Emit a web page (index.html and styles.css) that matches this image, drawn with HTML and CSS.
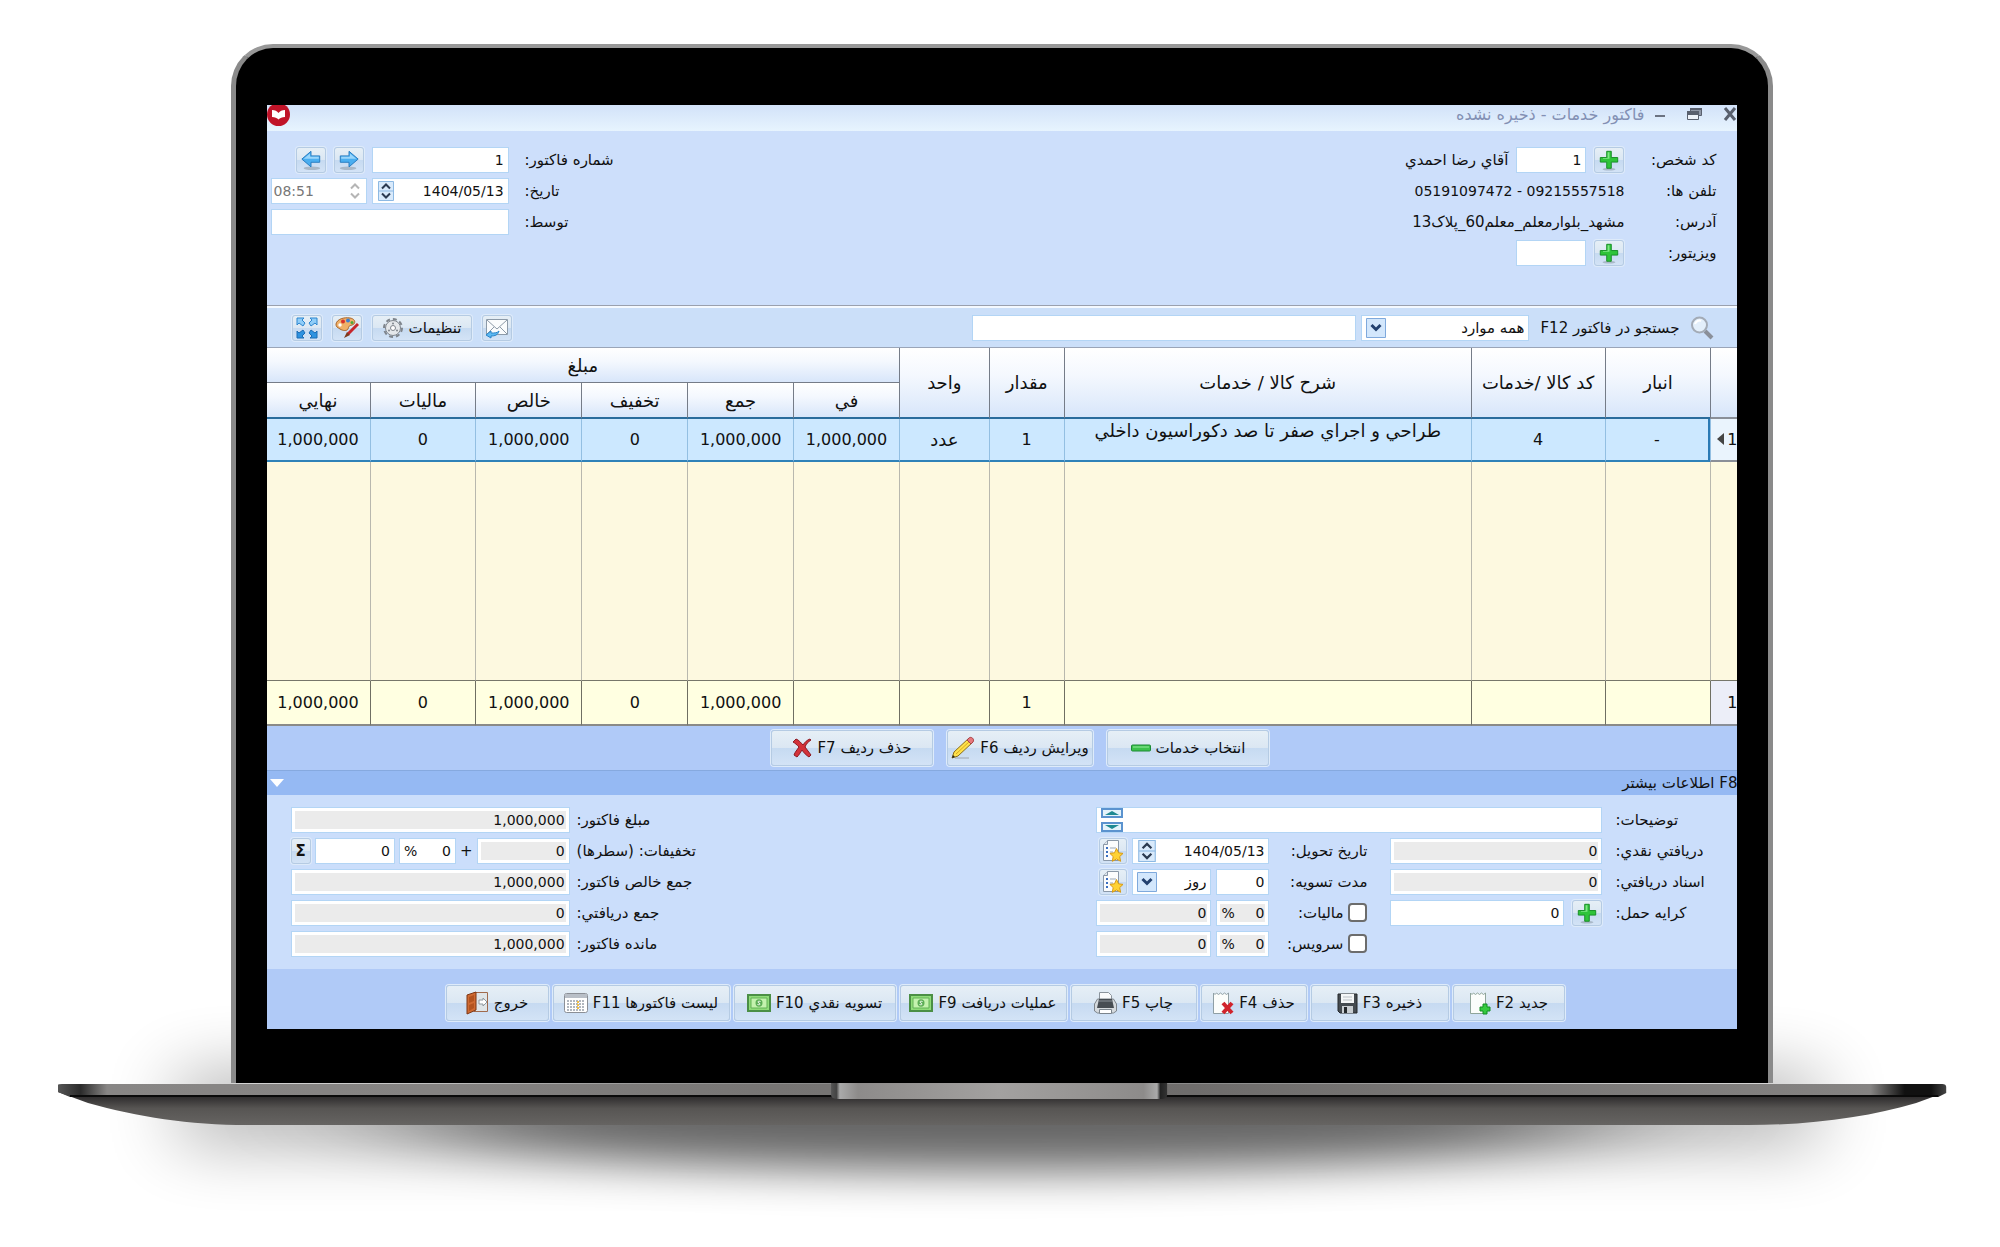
FILE: index.html
```
<!DOCTYPE html>
<html lang="fa">
<head>
<meta charset="UTF-8">
<meta name="viewport" content="width=device-width, initial-scale=1.0">
<title>فاکتور خدمات</title>
<link rel="stylesheet" href="styles.css">
</head>
<body>
  <!-- Shared icons -->
  <svg class="sprite" aria-hidden="true">
    <symbol id="i-plus" viewBox="0 0 24 24">
      <ellipse cx="12" cy="22" rx="7" ry="1.5" fill="#a9b8c8"/>
      <path d="M9.500 2.500h5v6.800h7v5h-7v6.700h-5v-6.700h-7v-5h7z" fill="#2fc43a" stroke="#138a22"/>
      <path d="M10.500 3.500h2v7h-7v-.8h5z" fill="#7fe886"/>
    </symbol>
    <symbol id="i-arrow" viewBox="0 0 24 24">
      <ellipse cx="13" cy="21" rx="9" ry="2" fill="#a9b8c8"/>
      <path d="M2 11L12 2.500v5h9.500v7H12v5z" fill="#4aaef0" stroke="#2277bd" stroke-linejoin="round"/>
      <path d="M4 10.700L11 5v3.500h9.500v2z" fill="#9ad6fb"/>
    </symbol>
    <symbol id="i-spin" viewBox="0 0 18 20">
      <path d="M1.500.5h15v19h-15z" fill="#d9eafb" stroke="#8db9e3"/>
      <path d="M1.500 10h15" stroke="#8db9e3"/>
      <path d="M5 7.500l4-4 4 4M5 12.500l4 4 4-4" fill="none" stroke="#2b3a50" stroke-width="2"/>
    </symbol>
    <symbol id="i-drop" viewBox="0 0 20 20">
      <path d="M.5.5h19v19H.5z" fill="#d3e7fc" stroke="#7fa9dc"/>
      <path d="M5.500 7l4.500 4.500L14.500 7" fill="none" stroke="#23416f" stroke-width="3"/>
    </symbol>
    <symbol id="i-list" viewBox="0 0 24 24">
      <path d="M6.500 1.500h11v20h-15v-16z" fill="#fbfcfd" stroke="#8a98a8"/>
      <path d="M6.500 1.500v4h-4" fill="#dde5ec" stroke="#8a98a8"/>
      <path d="M5 9h2M5 13h2M5 17h2" stroke="#3a6ec0" stroke-width="2"/>
      <path d="M9 9h6M9 13h3" stroke="#9aa7b5"/>
      <path d="M15.500 9.500l2 4.300 4.500.6-3.300 3.200.9 4.700-4.100-2.300-4.200 2.300.9-4.700-3.300-3.200 4.600-.6z" fill="#ffd233" stroke="#d99a12"/>
    </symbol>
    <symbol id="i-money" viewBox="0 0 24 18">
      <path d="M1 1h22v16H1z" fill="#8fdc79" stroke="#4b8f45" stroke-width="2"/>
      <path d="M4 4h16v10H4z" fill="#c4f2ae" stroke="#62b257"/>
      <ellipse cx="12" cy="9" rx="3.500" ry="3.700" fill="#5cae55"/>
      <path d="M13.500 7.500c-3-1-3 1-1.500 1.500s1.500 2.500-1.500 1.500" fill="none" stroke="#fff"/>
    </symbol>
  </svg>

  <main class="laptop">
    <div class="lid">
      <div class="screen" dir="rtl">

        <header class="titlebar">
          <button class="win-btn close" aria-label="بستن"><svg width="14" height="14" viewBox="0 0 14 14"><path d="M2 1l10 12M12 1L2 13" stroke="#59606e" stroke-width="3"/></svg></button>
          <button class="win-btn" aria-label="بازیابی"><svg width="17" height="14" viewBox="0 0 17 14"><path d="M4.500 1.500h11v7h-3v-3h-8z" fill="#8f97a6" stroke="#59606e"/><path d="M1.500 4.500h11v8h-11z" fill="#eef3fa" stroke="#59606e"/><path d="M1 4h12v4H1zM4 1h12v2H4z" fill="#59606e"/></svg></button>
          <button class="win-btn" aria-label="کوچک کردن"><svg width="12" height="14" viewBox="0 0 12 14"><path d="M1 9h10" stroke="#6b7281" stroke-width="2"/></svg></button>
          <h1>فاکتور خدمات - ذخیره نشده</h1>
          <svg class="brand" width="23" height="23" viewBox="0 0 23 23"><circle cx="11.500" cy="11.500" r="11.500" fill="#c01328"/><path d="M5 7c3 0 5 1 6.500 3C13 8 15 7 18 7v7c-3 0-5 1-6.500 2.500C10 15 8 14 5 14z" fill="#fff"/></svg>
        </header>

        <section class="head">
          <div class="customer">
            <label for="personCode">کد شخص:</label>
            <div class="line">
              <button class="icon-btn" aria-label="افزودن شخص"><svg width="22" height="22"><use href="#i-plus"/></svg></button>
              <input class="box code" type="text" id="personCode" value="1">
              <span>آقاي رضا احمدي</span>
            </div>
            <span>تلفن ها:</span>
            <div class="line phone">09215557518 - 05191097472</div>
            <span>آدرس:</span>
            <div class="line">مشهد_بلوارمعلم_معلم60_پلاک13</div>
            <label for="visitor">ویزیتور:</label>
            <div class="line">
              <button class="icon-btn" aria-label="افزودن ویزیتور"><svg width="22" height="22"><use href="#i-plus"/></svg></button>
              <input class="box code" type="text" id="visitor">
            </div>
          </div>

          <div class="invoice">
            <label for="invoiceNo">شماره فاکتور:</label>
            <div class="line">
              <input class="box date" type="text" id="invoiceNo" value="1">
              <button class="icon-btn" aria-label="بعدی"><svg class="flip" width="22" height="22"><use href="#i-arrow"/></svg></button>
              <button class="icon-btn" aria-label="قبلی"><svg width="22" height="22"><use href="#i-arrow"/></svg></button>
            </div>
            <label for="invoiceDate">تاریخ:</label>
            <div class="line tight">
              <div class="box date">
                <input type="text" id="invoiceDate" value="1404/05/13">
                <svg class="spin" width="18" height="20"><use href="#i-spin"/></svg>
              </div>
              <div class="box time">
                <svg width="18" height="20" viewBox="0 0 18 20"><path d="M5 7.500l4-4 4 4M5 12.500l4 4 4-4" fill="none" stroke="#b5b5b5" stroke-width="2"/></svg>
                <input type="text" aria-label="ساعت" value="08:51" disabled>
              </div>
            </div>
            <label for="by">توسط:</label>
            <div class="line"><input class="box full" type="text" id="by"></div>
          </div>
        </section>

        <section class="toolbar">
          <svg width="24" height="24" viewBox="0 0 24 24"><path d="M15 15l7 7" stroke="#8a8f99" stroke-width="4"/><circle cx="9.500" cy="9" r="7.500" fill="#e3effb" stroke="#a3abb6" stroke-width="2"/><path d="M5 8c1-3 4-4 6-3" fill="none" stroke="#fff" stroke-width="2"/></svg>
          <label for="search">جستجو در فاکتور F12</label>
          <div class="box filter">
            <select aria-label="محدوده جستجو"><option>همه موارد</option></select>
            <svg width="20" height="20"><use href="#i-drop"/></svg>
          </div>
          <input class="box search" type="text" id="search">
          <div class="tools">
            <button class="icon-btn" aria-label="ارسال پیام"><svg width="24" height="22" viewBox="0 0 24 22"><path d="M1.500 2.500h21v15h-21z" fill="#fafcfd" stroke="#8c9aa8"/><path d="M2 3l10 9L22 3M2 17l7-7M22 17l-7-7" fill="none" stroke="#8c9aa8"/><path d="M1 18l5-4v2c4 0 6 0 8-2-1 4-4 5-8 5v2z" fill="#5cb9f2" stroke="#2a84c8"/></svg></button>
            <button class="btn settings">تنظیمات <svg width="22" height="22" viewBox="0 0 22 22"><circle cx="11" cy="11" r="9" fill="none" stroke="#7f858c" stroke-width="2" stroke-dasharray="4 3"/><circle cx="11" cy="11" r="7.500" fill="#e4e7ea" stroke="#7f858c"/><circle cx="11" cy="11" r="2.500" fill="#fff" stroke="#7f858c"/><circle cx="11" cy="6.500" r="1" fill="#7f858c"/><circle cx="7" cy="13.500" r="1" fill="#7f858c"/><circle cx="15" cy="13.500" r="1" fill="#7f858c"/></svg></button>
            <button class="icon-btn" aria-label="رنگ‌ها"><svg width="24" height="22" viewBox="0 0 24 22"><path d="M1 7c1-5 8-7 14-6s6 6 2 7-3 2-4 4-5 2-8 0-4-2-4-5z" fill="#efb068" stroke="#a8642a"/><circle cx="5" cy="8" r="1.700" fill="#fff"/><circle cx="8" cy="4.500" r="2" fill="#d8332c"/><circle cx="13" cy="3.500" r="2" fill="#3c7fd0"/><circle cx="17" cy="5.500" r="1.500" fill="#4ca93e"/><path d="M23 7L13 17" stroke="#c6262c" stroke-width="3"/><path d="M12 15l3 3-6 3z" fill="#7d3a1c"/></svg></button>
            <button class="icon-btn" aria-label="تمام صفحه"><svg width="24" height="22" viewBox="0 0 24 22"><path d="M2 1h7L7 3l3 3-2 3-4-3-2 2zM22 1h-7l2 2-3 3 2 3 4-3 2 2z" fill="#8fcdf8" stroke="#2d86cf"/><path d="M2 21h7l-2-2 3-3-2-3-4 3-2-2zM22 21h-7l2-2-3-3 2-3 4 3 2-2z" fill="#2f93e0" stroke="#1c6cb4"/></svg></button>
          </div>
        </section>

        <table class="items">
          <colgroup>
            <col class="c-mark"><col class="c-store"><col class="c-code"><col class="c-desc"><col class="c-qty"><col class="c-unit">
            <col class="c-sum"><col class="c-sum"><col class="c-sum"><col class="c-sum"><col class="c-sum"><col class="c-final">
          </colgroup>
          <thead>
            <tr>
              <th rowspan="2"></th>
              <th rowspan="2">انبار</th>
              <th rowspan="2">کد کالا /خدمات</th>
              <th rowspan="2">شرح کالا / خدمات</th>
              <th rowspan="2">مقدار</th>
              <th rowspan="2">واحد</th>
              <th colspan="6" class="group">مبلغ</th>
            </tr>
            <tr class="sub">
              <th>في</th>
              <th>جمع</th>
              <th>تخفیف</th>
              <th>خالص</th>
              <th>مالیات</th>
              <th>نهایي</th>
            </tr>
          </thead>
          <tbody>
            <tr class="selected">
              <td class="mark"><span>1</span><svg width="7" height="12" viewBox="0 0 7 12"><path d="M7 0v12L0 6z" fill="#444"/></svg></td>
              <td>-</td>
              <td>4</td>
              <td class="desc">طراحي و اجراي صفر تا صد دکوراسیون داخلي</td>
              <td>1</td>
              <td class="unit">عدد</td>
              <td>1,000,000</td>
              <td>1,000,000</td>
              <td>0</td>
              <td>1,000,000</td>
              <td>0</td>
              <td>1,000,000</td>
            </tr>
            <tr class="blank">
              <td></td><td></td><td></td><td></td><td></td><td></td><td></td><td></td><td></td><td></td><td></td><td></td>
            </tr>
          </tbody>
          <tfoot>
            <tr>
              <td class="mark"><span>1</span></td>
              <td></td>
              <td></td>
              <td></td>
              <td>1</td>
              <td></td>
              <td></td>
              <td>1,000,000</td>
              <td>0</td>
              <td>1,000,000</td>
              <td>0</td>
              <td>1,000,000</td>
            </tr>
          </tfoot>
        </table>

        <nav class="row-actions">
          <button class="btn w-l">انتخاب خدمات <svg width="20" height="8" viewBox="0 0 20 8"><rect x=".5" y="1" width="19" height="6" rx="1" fill="#3cc24c" stroke="#1d8a35"/><path d="M2 3h16" stroke="#93eb9b"/></svg></button>
          <button class="btn w-m">ویرایش ردیف F6 <svg width="24" height="24" viewBox="0 0 24 24"><path d="M4 22h14" stroke="#b5c2d2" stroke-width="2"/><path d="M1 22l2-6L18 2l4 4L7 20z" fill="#ffe14a" stroke="#8a6d1c"/><path d="M5 18L20 4" stroke="#d9a91f"/><path d="M18 2c2-2 6 1 4 4l-2 2-4-4z" fill="#e6787c" stroke="#a84448"/><path d="M1 22l1-3 2 2z" fill="#222"/></svg></button>
          <button class="btn w-l">حذف ردیف F7 <svg width="20" height="20" viewBox="0 0 20 20"><path d="M1 4l3-3c3 1 5 4 7 6 2-3 4-5 7-6l1 1c-3 2-5 4-6 7 2 3 4 5 6 8l-2 2c-3-2-5-4-7-7-2 3-3 5-5 7l-3-2c1-3 3-5 5-8C5 7 3 5 1 4z" fill="#d3323a" stroke="#8e1a22"/></svg></button>
        </nav>

        <div class="band">
          <h2>F8 اطلاعات بیشتر</h2>
          <svg width="14" height="8" viewBox="0 0 14 8"><path d="M0 0h14L7 8z" fill="#fff"/></svg>
        </div>

        <section class="details">
          <div class="extra">
            <label class="end" for="notes">توضیحات:</label>
            <div class="box notes">
              <input type="text" id="notes">
              <svg width="22" height="24" viewBox="0 0 22 24"><path d="M1 1h20v8H1zM1 15h20v8H1z" fill="#e4f3fb" stroke="#5b93cf" stroke-width="2"/><path d="M4 7l7-4 7 4zM4 17l7 4 7-4z" fill="#1f8a93"/></svg>
            </div>

            <label class="end" for="cash">دریافتي نقدي:</label>
            <input class="box gray" type="text" id="cash" value="0" readonly>
            <label for="delivery">تاریخ تحویل:</label>
            <div class="line tight">
              <div class="box grow">
                <input type="text" id="delivery" value="1404/05/13">
                <svg class="spin" width="20" height="22"><use href="#i-spin"/></svg>
              </div>
              <button class="icon-btn pick" aria-label="انتخاب تاریخ"><svg width="24" height="24"><use href="#i-list"/></svg></button>
            </div>

            <label class="end" for="docs">اسناد دریافتي:</label>
            <input class="box gray" type="text" id="docs" value="0" readonly>
            <label for="term">مدت تسویه:</label>
            <div class="line tight">
              <input class="box small" type="text" id="term" value="0">
              <div class="box grow">
                <select aria-label="واحد مدت"><option>روز</option></select>
                <svg width="20" height="20"><use href="#i-drop"/></svg>
              </div>
              <button class="icon-btn pick" aria-label="انتخاب مدت"><svg width="24" height="24"><use href="#i-list"/></svg></button>
            </div>

            <label class="end" for="freight">کرایه حمل:</label>
            <div class="line">
              <button class="icon-btn" aria-label="افزودن کرایه"><svg width="22" height="22"><use href="#i-plus"/></svg></button>
              <input class="box grow" type="text" id="freight" value="0">
            </div>
            <label class="check"><input type="checkbox"> مالیات:</label>
            <div class="line tight">
              <div class="box small gray"><input type="text" aria-label="درصد مالیات" value="0" readonly><span>%</span></div>
              <input class="box gray grow" type="text" aria-label="مبلغ مالیات" value="0" readonly>
            </div>

            <label class="check last"><input type="checkbox"> سرویس:</label>
            <div class="line tight">
              <div class="box small gray"><input type="text" aria-label="درصد سرویس" value="0" readonly><span>%</span></div>
              <input class="box gray grow" type="text" aria-label="مبلغ سرویس" value="0" readonly>
            </div>
          </div>

          <div class="totals">
            <label class="end" for="total">مبلغ فاکتور:</label>
            <input class="box gray" type="text" id="total" value="1,000,000" readonly>
            <label class="end" for="discount">تخفیفات: (سطرها)</label>
            <div class="line tight">
              <input class="box gray row-disc" type="text" id="discount" value="0" readonly>
              <span>+</span>
              <div class="box percent"><input type="text" aria-label="درصد تخفیف" value="0"><span>%</span></div>
              <input class="box grow" type="text" aria-label="مبلغ تخفیف" value="0">
              <button class="icon-btn sigma" aria-label="جمع">Σ</button>
            </div>
            <label class="end" for="net">جمع خالص فاکتور:</label>
            <input class="box gray" type="text" id="net" value="1,000,000" readonly>
            <label class="end" for="received">جمع دریافتي:</label>
            <input class="box gray" type="text" id="received" value="0" readonly>
            <label class="end" for="remain">مانده فاکتور:</label>
            <input class="box gray" type="text" id="remain" value="1,000,000" readonly>
          </div>
        </section>

        <footer class="actions">
          <button class="btn w-new">جدید F2 <svg width="22" height="24" viewBox="0 0 22 24"><path d="M1.500 2v20.500h15V2l-2 1.500L12.500 2l-2 1.500L8.500 2l-2 1.500L4.500 2 3 3.500z" fill="#fbfdfb" stroke="#8fa59b"/><path d="M14 13h4v3h3v4h-3v3h-4v-3h-3v-4h3z" fill="#35ca3f" stroke="#128d22"/></svg></button>
          <button class="btn w-save">ذخیره F3 <svg width="21" height="21" viewBox="0 0 21 21"><path d="M1 1h19v19H3l-2-2z" fill="#454b50" stroke="#24282b"/><path d="M4 1h13v9H4z" fill="#f4f6f7"/><path d="M6 4h9M6 7h9" stroke="#b9bfc4"/><path d="M5 13h11v7H5z" fill="#c9ced2"/><path d="M7 14h3v6H7z" fill="#24282b"/></svg></button>
          <button class="btn w-del">حذف F4 <svg width="22" height="24" viewBox="0 0 22 24"><path d="M1.500 2v20.500h15V2l-2 1.500L12.500 2l-2 1.500L8.500 2l-2 1.500L4.500 2 3 3.500z" fill="#fbfdfb" stroke="#8f9fa5"/><path d="M11 12l9 10M20 12l-9 10" stroke="#d0242c" stroke-width="4"/></svg></button>
          <button class="btn w-print">چاپ F5 <svg width="23" height="24" viewBox="0 0 23 24"><path d="M5.500 10V1.500h9l3 3V10" fill="#fafbfc" stroke="#8b949c"/><path d="M3.500 8h16l3 5v7l-3 2h-16l-3-2v-7z" fill="#d5dade" stroke="#7d848a"/><path d="M5 8h13l2 9H3z" fill="#474d53"/><path d="M5 10h13" stroke="#8a9198"/><path d="M5.500 18.500h12v4h-12z" fill="#fff" stroke="#7b848c"/></svg></button>
          <button class="btn w-f9">عملیات دریافت F9 <svg width="24" height="18"><use href="#i-money"/></svg></button>
          <button class="btn w-f10">تسویه نقدي F10 <svg width="24" height="18"><use href="#i-money"/></svg></button>
          <button class="btn w-f11">لیست فاکتورها F11 <svg width="24" height="20" viewBox="0 0 24 20"><rect x=".5" y=".5" width="23" height="19" rx="2" fill="#fff" stroke="#8b8f96"/><path d="M1 1h22v4H1z" fill="#b9bfc7"/><path d="M3 8h18M3 11h18M3 14h18M3 17h18" stroke="#b1b7bf" stroke-width="2" stroke-dasharray="2 1"/><path d="M14 8v9" stroke="#f0bf4a" stroke-width="2" stroke-dasharray="2 1"/></svg></button>
          <button class="btn w-exit">خروج <svg width="23" height="24" viewBox="0 0 23 24"><path d="M8 1.500h13.500v19H8z" fill="#dfe5e8" stroke="#a06a4c"/><path d="M1 4l9-3v18l-9 4z" fill="#cf6a32" stroke="#7d3614"/><path d="M3 6l5-2v6l-5 2zM3 14l5-2v5l-5 3z" fill="#b3531f"/><path d="M13 9h4V7l4 4-4 4v-2h-4z" fill="#fff" stroke="#8f989f"/></svg></button>
        </footer>

      </div>
    </div>

    <svg class="base" viewBox="0 0 1888 42" preserveAspectRatio="none" aria-hidden="true">
      <defs>
        <linearGradient id="gBottom" x1="0" y1="0" x2="0" y2="1">
          <stop offset="0" stop-color="#111"/>
          <stop offset=".1" stop-color="#2a2829"/>
          <stop offset=".5" stop-color="#575553"/>
          <stop offset="1" stop-color="#666462"/>
        </linearGradient>
        <linearGradient id="gEdge" x1="0" y1="0" x2="1" y2="0">
          <stop offset="0" stop-color="#555"/>
          <stop offset=".012" stop-color="#2b2b2b"/>
          <stop offset=".026" stop-color="#888685"/>
          <stop offset=".2" stop-color="#858382"/>
          <stop offset=".38" stop-color="#777574"/>
          <stop offset=".6" stop-color="#6f6d6c"/>
          <stop offset=".96" stop-color="#858382"/>
          <stop offset=".978" stop-color="#111"/>
          <stop offset=".992" stop-color="#111"/>
          <stop offset="1" stop-color="#444"/>
        </linearGradient>
        <linearGradient id="gNotch" x1="0" y1="0" x2="1" y2="0">
          <stop offset="0" stop-color="#555"/>
          <stop offset=".016" stop-color="#444"/>
          <stop offset=".026" stop-color="#aaa"/>
          <stop offset=".08" stop-color="#8d8b8a"/>
          <stop offset=".5" stop-color="#a3a1a0"/>
          <stop offset=".93" stop-color="#8d8b8a"/>
          <stop offset=".97" stop-color="#aaa"/>
          <stop offset=".98" stop-color="#222"/>
          <stop offset="1" stop-color="#333"/>
        </linearGradient>
        <filter id="soft" x="-20%" y="-150%" width="140%" height="400%"><feGaussianBlur stdDeviation="36 30"/></filter>
        <filter id="deep" x="-40%" y="-150%" width="180%" height="400%"><feGaussianBlur stdDeviation="90 22"/></filter>
      </defs>
      <rect x="120" y="-20" width="1640" height="90" fill="#000" opacity=".23" filter="url(#soft)"/>
      <ellipse cx="944" cy="38" rx="600" ry="50" fill="#000" opacity=".5" filter="url(#deep)"/>
      <path d="M0 9L30 20C80 34 130 42 190 42H1690C1755 42 1810 34 1858 20L1888 9z" fill="url(#gBottom)"/>
      <path d="M0 2Q0 1 4 1H1884Q1888 1 1888 4V10L1880 14H12L0 9z" fill="url(#gEdge)"/>
      <path d="M12 13H1880" stroke="#0a0a0a" stroke-width="2"/>
      <path d="M773 0H1109V12Q1109 16 1103 16H780Q773 16 773 12z" fill="url(#gNotch)"/>
    </svg>
  </main>
</body>
</html>
```
FILE: styles.css
```
* {
  box-sizing: border-box;
}

body {
  margin: 0;
  background-color: #fff;
  color: #111;
  font-family: "DejaVu Sans", Tahoma, sans-serif;
  font-size: 15px;
}

.sprite {
  display: none;
}

/* Laptop frame */
.laptop {
  display: flex;
  flex-direction: column;
  align-items: center;
  min-height: 100vh;
  padding: 44px 0 0 4px;
  overflow: hidden;
}

.lid {
  position: relative;
  z-index: 1;
  width: 77.3%;
  padding: 57px 31px 54px;
  background-color: #000;
  border: solid;
  border-width: 4px 5px 0;
  border-color: #989898 #8a8a8a;
  border-radius: 42px 42px 0 0;
}

.base {
  width: 94.6%;
  height: 42px;
  overflow: visible;
}

.screen {
  overflow: hidden;
  background-color: #cbdffb;
}

/* Shared controls */
button,
input,
select {
  font: inherit;
  color: inherit;
}

input,
.box span {
  font-size: 14px;
}

.box {
  height: 26px;
  padding: 0 4px;
  background-color: #fff;
  border: 1px solid #b3d5f5;
  outline: none;
  text-align: right;
  direction: ltr;
}

div.box {
  display: flex;
  align-items: center;
  justify-content: space-between;
  direction: rtl;
}

.box input,
.box select {
  flex: 1;
  width: 100%;
  min-width: 0;
  height: 22px;
  padding: 0;
  background: none;
  border: 0;
  outline: none;
  text-align: right;
}

.box select {
  appearance: none;
}

.box svg {
  flex: none;
}

.gray {
  background-color: #ebebeb;
  box-shadow: inset 0 0 0 3px #fff;
}

.icon-btn,
.btn {
  display: flex;
  align-items: center;
  justify-content: center;
  padding: 0;
  background: linear-gradient(#e6eff6, #dbe7f3 50%, #c6daf1 51%, #d3e3f6);
  border: 1px solid #b5cbe3;
  border-radius: 3px;
  box-shadow: 0 0 0 1px #deebfa;
}

.icon-btn {
  flex: none;
  width: 30px;
  height: 26px;
}

.btn {
  gap: 5px;
  height: 36px;
  white-space: nowrap;
}

.line {
  display: flex;
  align-items: center;
  gap: 8px;
  min-width: 0;
  white-space: nowrap;
}

.tight {
  gap: 5px;
}

.grow {
  flex: 1;
  width: 0;
}

.flip {
  transform: scaleX(-1);
}

/* Title bar */
.titlebar {
  display: flex;
  align-items: center;
  height: 26px;
  padding-bottom: 8px;
  background: linear-gradient(#d2e2f9, #e7f4fe);
}

.titlebar h1 {
  margin: 0 10px 0 0;
  font-size: 16px;
  font-weight: normal;
  color: #8390b4;
}

.win-btn {
  display: flex;
  padding: 0;
  margin-left: 20px;
  background: none;
  border: 0;
}

.win-btn:nth-child(3) {
  margin-left: 0;
}

.brand {
  margin-right: auto;
}

/* Invoice header */
.head {
  display: flex;
  justify-content: space-between;
  height: 175px;
  padding: 13px 21px 0 4px;
  background-color: #cddffb;
  border-bottom: 1px solid #9aa0ae;
}

.customer,
.invoice {
  display: grid;
  grid-auto-rows: 31px;
  align-content: start;
  align-items: center;
}

.customer {
  grid-template-columns: 92px auto;
}

.invoice {
  grid-template-columns: auto 238px;
  column-gap: 16px;
}

.invoice label,
.end {
  text-align: left;
}

.phone {
  font-size: 14px;
}

.code {
  width: 70px;
}

.date {
  width: 137px;
}

.time {
  flex: 1;
  padding: 0 2px;
  color: #777;
}

.time input {
  text-align: left;
  direction: ltr;
}

.full {
  width: 100%;
}

/* Search toolbar */
.toolbar {
  display: flex;
  align-items: center;
  gap: 5px;
  height: 42px;
  padding: 0 23px 0 25px;
  background-color: #cbdff9;
  border-top: 2px solid #f4f9ff;
  border-bottom: 1px solid #9aa5b8;
}

.toolbar label {
  margin: 0 6px;
  white-space: nowrap;
}

.filter {
  width: 168px;
}

.search {
  width: 27%;
}

.tools {
  display: flex;
  gap: 10px;
  margin-right: auto;
}

.settings {
  width: 100px;
  height: 26px;
}

/* Invoice rows */
.items {
  width: 100%;
  table-layout: fixed;
  border-collapse: separate;
  border-spacing: 0;
  font-size: 16px;
  text-align: center;
}

.c-mark { width: 27px; }
.c-store { width: 7.2%; }
.c-code { width: 9.1%; }
.c-qty { width: 5.1%; }
.c-unit { width: 6.1%; }
.c-sum { width: 7.2%; }
.c-final { width: 7%; }

.items th,
.items td {
  padding: 0;
  border-left: 1px solid #b8b8ae;
  white-space: nowrap;
}

.items th {
  background: linear-gradient(#fff, #f4f8fe 40%, #d8e6fa);
  border-color: #757c88;
  border-bottom: 2px solid #2a6c9c;
  font-size: 18px;
  font-weight: normal;
}

.items th.group {
  height: 35px;
  border-bottom: 1px solid #757c88;
}

.items th:first-child[rowspan] {
  border-bottom-color: #8a8f98;
}

.sub th {
  height: 36px;
}

.items tr > :last-child {
  border-left: 0;
}

.selected td {
  height: 43px;
  background-color: #cce8ff;
  border-color: #93bfe2;
  border-bottom: 2px solid #2f82b8;
}

.selected td:nth-child(2) {
  border-right: 2px solid #2a7ab5;
}

.selected .desc {
  font-size: 18px;
  line-height: 24px;
  vertical-align: top;
}

.selected .unit {
  font-size: 18px;
}

.items .mark {
  background-color: #eaf4fd;
  border-bottom-color: #8a8f98;
  text-align: right;
}

.mark svg {
  margin-right: 3px;
}

.blank td {
  height: 219px;
  background-color: #fdf9e0;
  border-bottom: 1px solid #77776a;
}

.items tfoot td {
  height: 45px;
  background-color: #ffffe1;
  border-color: #6f6f62;
  border-bottom: 2px solid #8a8a88;
}

.items tfoot .mark {
  background-color: #eceef8;
}

/* Row actions */
.row-actions {
  display: flex;
  justify-content: center;
  align-items: center;
  gap: 14px;
  height: 44px;
  padding-left: 36px;
  background-color: #b0caf8;
}

.w-l { width: 162px; }
.w-m { width: 146px; }

.band {
  display: flex;
  align-items: center;
  justify-content: space-between;
  height: 25px;
  padding-left: 3px;
  background-color: #95b9f3;
  border-top: 1px solid #86a9df;
}

.band h2 {
  margin: 0;
  font-size: 15px;
  font-weight: normal;
}

/* More information */
.details {
  display: flex;
  justify-content: space-between;
  height: 174px;
  padding: 9px 0 0 24px;
  background-color: #cbdefb;
}

.extra,
.totals {
  display: grid;
  grid-auto-rows: 31px;
  align-content: start;
  align-items: center;
}

.extra {
  grid-template-columns: 135px 212px 121px 173px;
}

.extra .end {
  padding-left: 13px;
  padding-right: 0;
}

.extra > label + * {
  min-width: 0;
}

.extra > label:not(.end) {
  padding-right: 23px;
}

.extra > .end {
  width: 135px;
}

.notes {
  grid-column: 2 / 5;
}

.pick {
  width: 28px;
  margin-left: 3px;
}

.small {
  width: 53px;
}

.check {
  display: flex;
  align-items: center;
  gap: 5px;
}

.check input {
  appearance: none;
  width: 19px;
  height: 19px;
  margin: 0;
  background-color: #fff;
  border: 2px solid #6c6c6c;
  border-radius: 4px;
}

.last {
  grid-column: 3;
}

.totals {
  grid-template-columns: auto 279px;
  column-gap: 7px;
}

.row-disc {
  width: 93px;
}

.totals .tight {
  gap: 4px;
}

.percent {
  width: 57px;
}

.sigma {
  width: 20px;
  font-weight: bold;
}

/* Footer buttons */
.actions {
  display: flex;
  justify-content: center;
  align-items: center;
  gap: 4px;
  height: 60px;
  padding: 8px 0 0 6px;
  background-color: #b0caf7;
}

.w-new { width: 112px; }
.w-save { width: 138px; }
.w-del { width: 106px; }
.w-print { width: 126px; }
.w-f9 { width: 167px; }
.w-f10 { width: 162px; }
.w-f11 { width: 177px; }
.w-exit { width: 103px; }
```
